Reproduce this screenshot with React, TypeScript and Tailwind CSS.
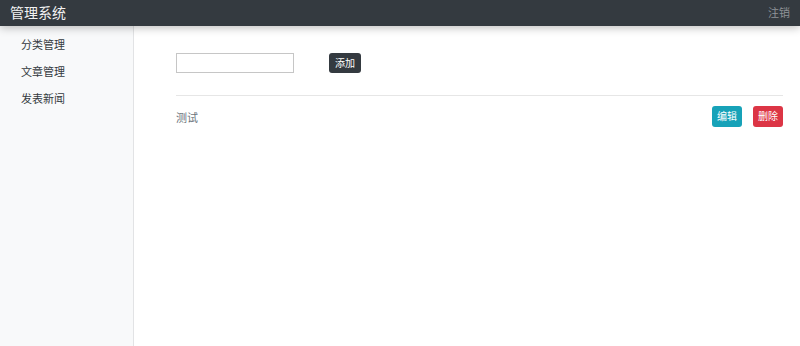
const font = { fontFamily: '"Liberation Sans", "Noto Sans CJK SC", sans-serif' };

const menus = ["分类管理", "文章管理", "发表新闻"];

const App = () => {
  return (
    <div className="w-[800px] h-[346px] flex flex-col bg-white overflow-hidden" style={font}>
      <header className="relative z-10 flex items-center justify-between h-[26px] px-[10px] bg-[#343a40] shadow-[0_2px_8px_rgba(0,0,0,0.25)]">
        <span className="text-[14px] text-[#f2f2f2]">管理系统</span>
        <button className="text-[11px] text-[#8f9398]">注销</button>
      </header>

      <div className="flex flex-1">
        <aside className="w-[134px] shrink-0 pt-[6px] bg-[#f8f9fa] border-r border-[#e2e3e5]">
          {menus.map((menu) => (
            <p key={menu} className="h-[27px] pl-[21px] leading-[27px] text-[11px] text-[#343a40]">
              {menu}
            </p>
          ))}
        </aside>

        <main className="flex-1 pl-[42px] pr-[17px] pt-[27px]">
          <div className="flex items-center h-[20px]">
            <input className="w-[118px] h-[20px] border border-[#c6c6c6] bg-white outline-none" />
            <button className="ml-[35px] h-[20px] px-[6px] rounded-[3px] bg-[#343a40] text-[10px] text-white">
              添加
            </button>
          </div>

          <div className="mt-[22px] border-t border-[#e6e6e6]" />

          <div className="flex items-center justify-between mt-[10px] h-[21px]">
            <span className="pt-[3px] text-[11px] text-[#6c757d]">测试</span>
            <div className="flex gap-[11px]">
              <button className="w-[30px] h-[21px] rounded-[3px] bg-[#17a2b8] text-[10px] text-white">
                编辑
              </button>
              <button className="w-[30px] h-[21px] rounded-[3px] bg-[#dc3545] text-[10px] text-white">
                删除
              </button>
            </div>
          </div>
        </main>
      </div>
    </div>
  );
};

export default App;
